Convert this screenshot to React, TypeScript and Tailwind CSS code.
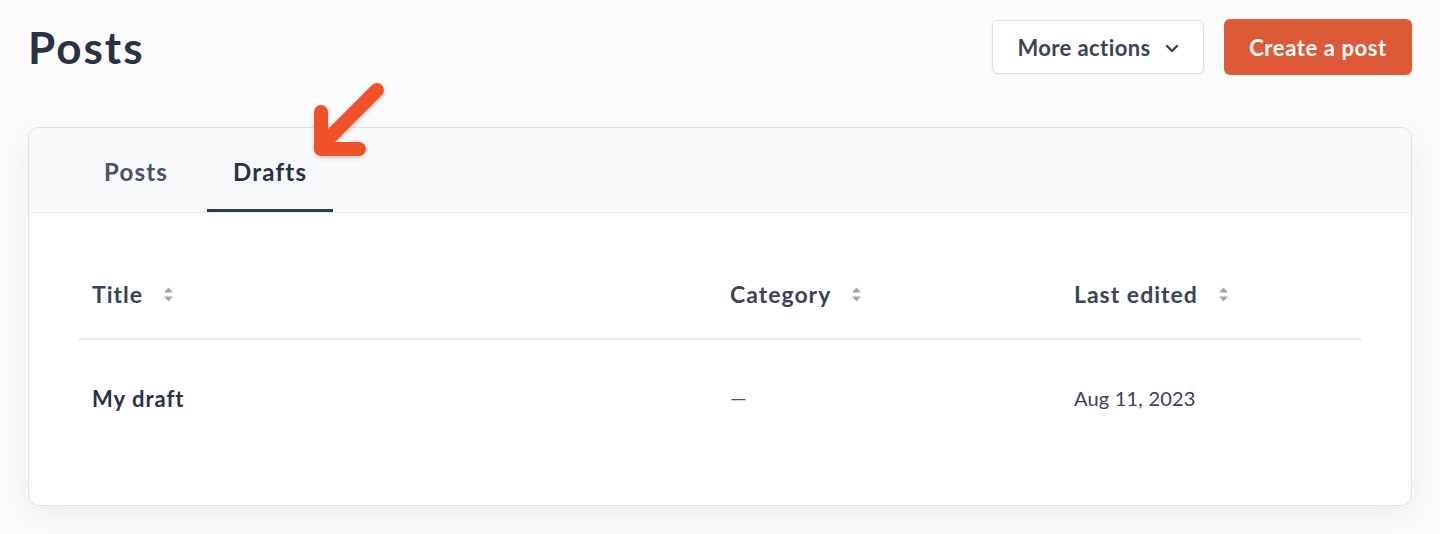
import React from "react";

const font = { fontFamily: "Lato, 'Open Sans', sans-serif" };

function SortIcon() {
  return (
    <svg width="11" height="15" viewBox="0 0 11 15" className="ml-5 shrink-0">
      <path d="M5.5 0.5 L10 5.5 L1 5.5 Z" fill="#a0a6b1" />
      <path d="M5.5 14.5 L10 9.5 L1 9.5 Z" fill="#a0a6b1" />
    </svg>
  );
}

function HeaderCell({ label, className }: { label: string; className: string }) {
  return (
    <div className={`flex items-center px-[13px] ${className}`}>
      <span className="text-[23px] font-bold tracking-[1px] text-[#3a4457]">{label}</span>
      <SortIcon />
    </div>
  );
}

export default function App() {
  return (
    <div className="relative min-h-screen bg-[#fbfbfb] px-[28px] pt-[19px] pb-[28px]" style={font}>
      {/* Page header */}
      <header className="flex items-center justify-between">
        <h1 className="text-[44px] leading-none font-bold text-[#283145] tracking-[2px]">Posts</h1>
        <div className="flex items-center gap-5">
          <button className="h-[54px] w-[212px] flex items-center justify-center gap-[14px] rounded-md border border-[#d9dfe8] bg-white shadow-[0_1px_3px_rgba(0,0,0,0.06)] text-[22px] font-bold tracking-[0.4px] text-[#3a4457]">
            More actions
            <svg width="14" height="9" viewBox="0 0 14 9" className="mt-[2px]">
              <path d="M2 2 L7 7 L12 2" stroke="#3a4457" strokeWidth="2.4" fill="none" strokeLinecap="round" strokeLinejoin="round" />
            </svg>
          </button>
          <button className="h-[56px] w-[188px] rounded-md bg-[#dc5a38] text-[22px] font-bold tracking-[0.6px] text-white">
            Create a post
          </button>
        </div>
      </header>

      {/* Card */}
      <section className="mt-[52px] rounded-[11px] border border-[#dde2ea] bg-white shadow-[0_8px_28px_rgba(0,0,0,0.06)] overflow-hidden">
        <nav className="flex h-[85px] items-end gap-[13px] border-b border-[#e1e5ec] bg-[#f8f9fb] pl-[49px]">
          <div className="flex h-full items-center px-[26px] pt-[4px] text-[24px] font-bold tracking-[1.2px] text-[#485266]">Posts</div>
          <div className="flex h-full items-center border-b-[3px] border-[#2f3a4d] px-[26px] pt-[7px] text-[24px] font-bold tracking-[1.2px] text-[#283145]">
            Drafts
          </div>
        </nav>

        <div className="px-[50px] pt-[37px] pb-[49px]">
          <div className="flex h-[90px] border-b-2 border-[#e4e7ed]">
            <HeaderCell label="Title" className="w-[638px]" />
            <HeaderCell label="Category" className="w-[344px]" />
            <HeaderCell label="Last edited" className="flex-1" />
          </div>
          <div className="flex h-[116px] items-center">
            <div className="w-[638px] px-[13px] text-[22px] font-bold tracking-[1px] text-[#283145]">My draft</div>
            <div className="w-[344px] px-[13px] text-[21px] text-[#4b5568]">—</div>
            <div className="flex-1 px-[13px] text-[20px] tracking-[0.2px] text-[#3a4457]">Aug 11, 2023</div>
          </div>
        </div>
      </section>

      {/* Annotation arrow */}
      <svg
        width="100"
        height="100"
        viewBox="0 0 100 100"
        className="absolute left-[300px] top-[75px] drop-shadow-[0_2px_2px_rgba(0,0,0,0.18)]"
      >
        <path
          d="M77 15 L23 69 M21 37 L21 74 L59 74"
          stroke="#ef5229"
          strokeWidth="14"
          fill="none"
          strokeLinecap="round"
          strokeLinejoin="round"
        />
      </svg>
    </div>
  );
}
